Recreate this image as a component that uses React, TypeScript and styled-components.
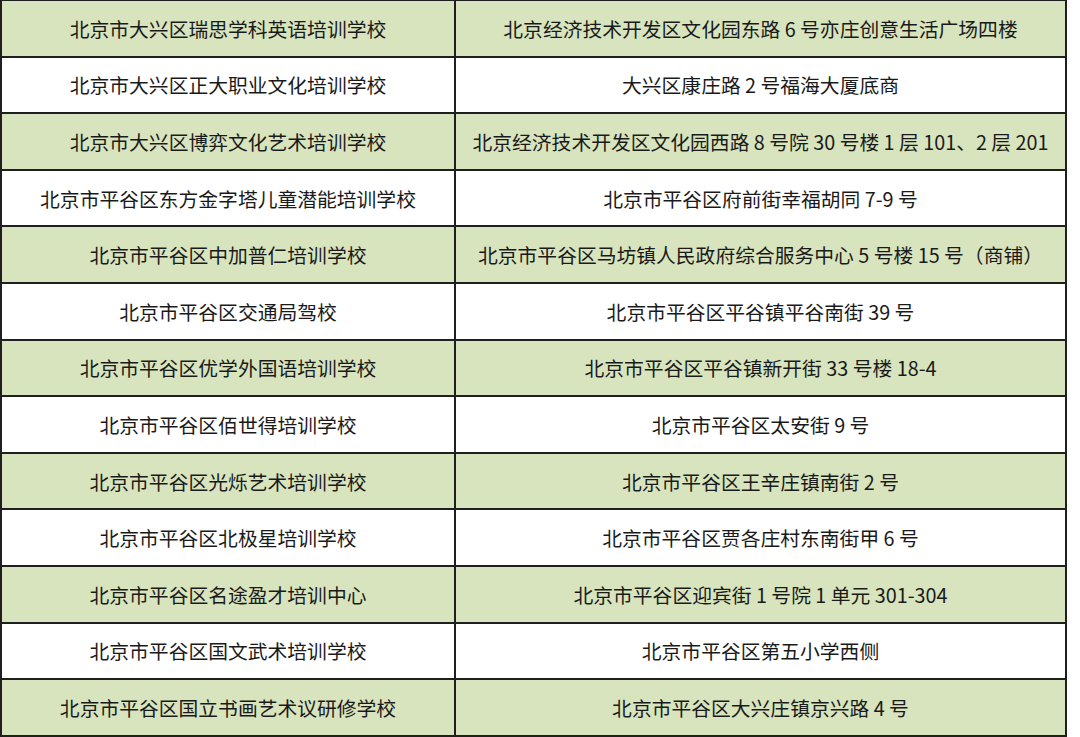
import styled, { createGlobalStyle } from 'styled-components'

const GlobalStyle = createGlobalStyle`
  html, body {
    margin: 0;
    padding: 0;
    background: #fff;
  }
  body {
    font-family: "Noto Sans CJK SC", "Liberation Sans", sans-serif;
  }
`

const Table = styled.table`
  border-collapse: collapse;
  table-layout: fixed;
  width: 1065px;
  height: 737px;
  margin-top: -1px;
`

const Row = styled.tr<{ $shaded: boolean }>`
  background: ${(p) => (p.$shaded ? '#d8e4bd' : '#ffffff')};
  height: 56.6px;
`

const Cell = styled.td`
  border: 2px solid #1f1f1f;
  padding: 0 4px;
  text-align: center;
  vertical-align: middle;
  font-size: 19.8px;
  color: #1a1a1a;
  white-space: nowrap;
`

const rows: [string, string][] = [
  ['北京市大兴区瑞思学科英语培训学校', '北京经济技术开发区文化园东路 6 号亦庄创意生活广场四楼'],
  ['北京市大兴区正大职业文化培训学校', '大兴区康庄路 2 号福海大厦底商'],
  ['北京市大兴区博弈文化艺术培训学校', '北京经济技术开发区文化园西路 8 号院 30 号楼 1 层 101、2 层 201'],
  ['北京市平谷区东方金字塔儿童潜能培训学校', '北京市平谷区府前街幸福胡同 7-9 号'],
  ['北京市平谷区中加普仁培训学校', '北京市平谷区马坊镇人民政府综合服务中心 5 号楼 15 号（商铺）'],
  ['北京市平谷区交通局驾校', '北京市平谷区平谷镇平谷南街 39 号'],
  ['北京市平谷区优学外国语培训学校', '北京市平谷区平谷镇新开街 33 号楼 18-4'],
  ['北京市平谷区佰世得培训学校', '北京市平谷区太安街 9 号'],
  ['北京市平谷区光烁艺术培训学校', '北京市平谷区王辛庄镇南街 2 号'],
  ['北京市平谷区北极星培训学校', '北京市平谷区贾各庄村东南街甲 6 号'],
  ['北京市平谷区名途盈才培训中心', '北京市平谷区迎宾街 1 号院 1 单元 301-304'],
  ['北京市平谷区国文武术培训学校', '北京市平谷区第五小学西侧'],
  ['北京市平谷区国立书画艺术议研修学校', '北京市平谷区大兴庄镇京兴路 4 号'],
]

export default function App() {
  return (
    <>
      <GlobalStyle />
      <Table>
        <colgroup>
          <col style={{ width: 454 }} />
          <col style={{ width: 611 }} />
        </colgroup>
        <tbody>
          {rows.map(([name, addr], i) => (
            <Row key={name} $shaded={i % 2 === 0}>
              <Cell>{name}</Cell>
              <Cell>{addr}</Cell>
            </Row>
          ))}
        </tbody>
      </Table>
    </>
  )
}
